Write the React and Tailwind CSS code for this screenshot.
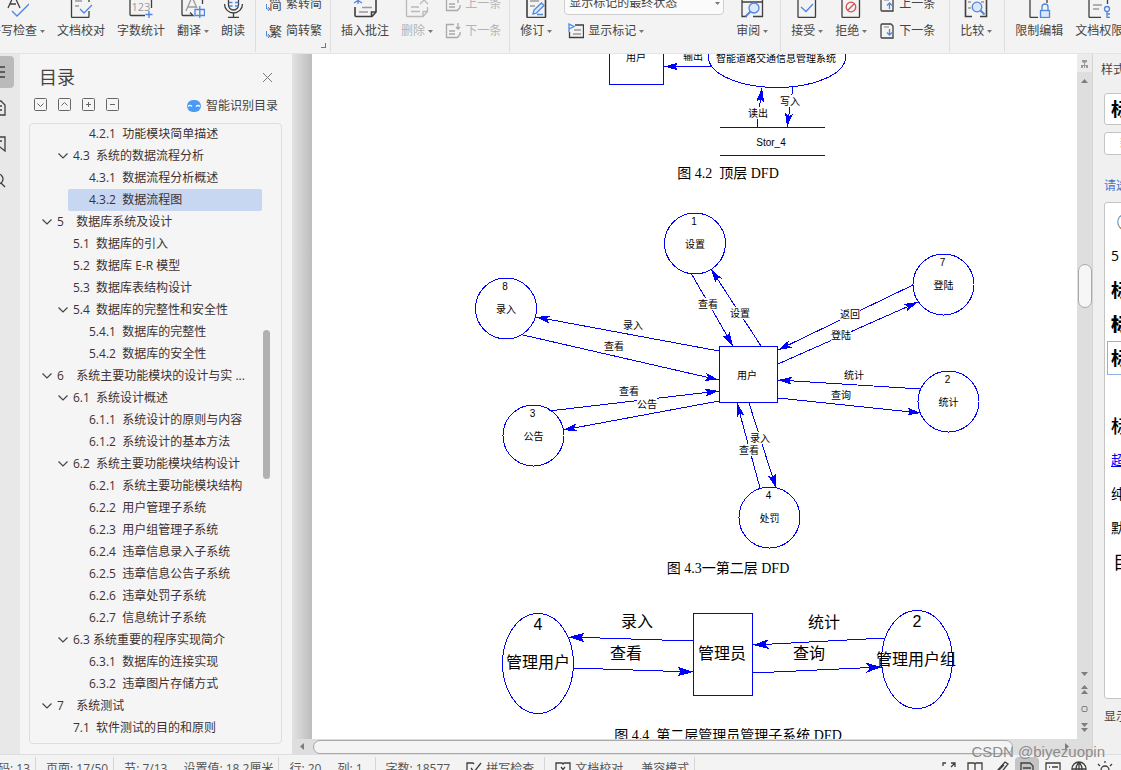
import React, { useState } from "react";

const DARK = "#3f3f3f";
const BLUE = "#4f86e0";
const GRAY = "#9a9a9a";

const outline = [
  { level: 3, num: "4.2.1", title: "功能模块简单描述" },
  { level: 2, num: "4.3", title: "系统的数据流程分析", open: true },
  { level: 3, num: "4.3.1", title: "数据流程分析概述" },
  { level: 3, num: "4.3.2", title: "数据流程图" },
  { level: 1, num: "5", title: "数据库系统及设计", open: true },
  { level: 2, num: "5.1", title: "数据库的引入" },
  { level: 2, num: "5.2", title: "数据库 E-R 模型" },
  { level: 2, num: "5.3", title: "数据库表结构设计" },
  { level: 2, num: "5.4", title: "数据库的完整性和安全性", open: true },
  { level: 3, num: "5.4.1", title: "数据库的完整性" },
  { level: 3, num: "5.4.2", title: "数据库的安全性" },
  { level: 1, num: "6", title: "系统主要功能模块的设计与实 ...", open: true },
  { level: 2, num: "6.1", title: "系统设计概述", open: true },
  { level: 3, num: "6.1.1", title: "系统设计的原则与内容" },
  { level: 3, num: "6.1.2", title: "系统设计的基本方法" },
  { level: 2, num: "6.2", title: "系统主要功能模块结构设计", open: true },
  { level: 3, num: "6.2.1", title: "系统主要功能模块结构" },
  { level: 3, num: "6.2.2", title: "用户管理子系统" },
  { level: 3, num: "6.2.3", title: "用户组管理子系统" },
  { level: 3, num: "6.2.4", title: "违章信息录入子系统" },
  { level: 3, num: "6.2.5", title: "违章信息公告子系统" },
  { level: 3, num: "6.2.6", title: "违章处罚子系统" },
  { level: 3, num: "6.2.7", title: "信息统计子系统" },
  { level: 2, num: "6.3", title: "系统重要的程序实现简介", open: true, tight: true },
  { level: 3, num: "6.3.1", title: "数据库的连接实现" },
  { level: 3, num: "6.3.2", title: "违章图片存储方式" },
  { level: 1, num: "7", title: "系统测试", open: true },
  { level: 2, num: "7.1", title: "软件测试的目的和原则" },
];

const indent = { 1: "ml-1 pl-2", 2: "ml-5 pl-2", 3: "ml-9 pl-2" };

const Icon = ({ size = 24, color = DARK, children }) => (
  <svg width={size} height={size} viewBox={`0 0 ${size} ${size}`} fill="none" stroke={color} strokeWidth="1.3" className="shrink-0">
    {children}
  </svg>
);

const icons = {
  spell: (
    <Icon>
      <path d="M3 14 9 1l6 13M5 10h6" />
      <path d="m7 17 5 5L24 10" stroke={BLUE} />
    </Icon>
  ),
  proof: (
    <Icon>
      <path d="M20 17v5.500q0 1-1 1H3.500q-1 0-1-1V0M20 8V0" />
      <path d="M6 7h7M6 12h4" stroke={GRAY} />
      <path d="m11 15 4 4 8-8" stroke={BLUE} />
    </Icon>
  ),
  count: (
    <Icon>
      <path d="M1 0v20.500q0 1 1 1h14M22.500 0v14" />
      <text x="2.500" y="17" fontSize="11" fill={GRAY} stroke="none" fontFamily="Open Sans">123</text>
      <path d="M20 17v7M16.500 20.500h7" stroke={BLUE} />
    </Icon>
  ),
  translate: (
    <Icon>
      <path d="M1 0v20.500q0 1 1 1h10l-3-3M21.500 0v10" />
      <path d="m5 17 6-14 5 11M7 13h8" stroke={GRAY} />
      <path d="M14 15.500h9.500v6H14zM18.800 12v12" stroke={BLUE} />
    </Icon>
  ),
  read: (
    <Icon>
      <rect x="7.500" y="-4" width="10" height="20" rx="5" />
      <path d="M3.500 10a9 9 0 0 0 18 0M12.500 19v4.500M7 23.500h11" />
      <path d="M8 8.500h3.500M14 8.500h3.500M8 12h3.500M14 12h3.500" stroke={BLUE} />
    </Icon>
  ),
  insert: (
    <Icon>
      <path d="M8 3h15v15l-4 4.500H3q-1 0-1-1V13M18.500 22v-4H23" strokeWidth="1.600" />
      <path d="M9 13.500h10M6 18h9" stroke={GRAY} />
      <path d="M5 2v8M1 4l8 5M9 4 1 9" stroke={BLUE} />
    </Icon>
  ),
  remove: (
    <Icon color="#b9b9b9">
      <path d="M13 3H2.500q-1 0-1 1v17.500q0 1 1 1H18l4.500-5V13M18 22v-4.500h4.500M6 13h8M6 17.500h9" />
      <path d="m15 10 4-4 4 4" />
    </Icon>
  ),
  revise: (
    <Icon>
      <rect x="3" y="-2" width="18.500" height="25.500" rx="1" strokeWidth="1.600" />
      <path d="M6 7h9M6 12h5" stroke={GRAY} />
      <path d="m9 20 1-4 7.500-7 2.500 2.500-7.500 7.500zM13 20.500h6" stroke={BLUE} fill="#dbe7fb" />
    </Icon>
  ),
  review: (
    <Icon>
      <path d="M7 22.500H2V0M13 22.500h9.500V0M2 8h20.500" />
      <circle cx="14" cy="14" r="5" stroke={BLUE} fill="#dbe7fb" />
      <path d="m10.500 17.500-5 5" stroke={BLUE} strokeWidth="2" />
    </Icon>
  ),
  accept: (
    <Icon>
      <rect x="3" y="-2" width="17.500" height="25.500" rx="1" />
      <path d="m6 13 5 4.500 7-7.500" stroke={BLUE} />
    </Icon>
  ),
  reject: (
    <Icon>
      <rect x="3" y="-2" width="17.500" height="25.500" rx="1" />
      <circle cx="12" cy="13" r="4.800" stroke="#dc4b4b" />
      <path d="m8.500 16.500 7-7" stroke="#dc4b4b" />
    </Icon>
  ),
  compare: (
    <Icon>
      <path d="M8 22.500H1.500V0M16 22.500h6.500V0" strokeWidth="1.600" />
      <path d="M4 8h3M4 14h3M17 8h3" stroke={GRAY} />
      <circle cx="13" cy="13" r="4.800" stroke={BLUE} fill="#dbe7fb" />
      <path d="m16.500 16.500 4 4" stroke={BLUE} strokeWidth="2" />
    </Icon>
  ),
  lock: (
    <Icon>
      <path d="M11 23.500H4q-1 0-1-1V0M20 9V0" />
      <rect x="13.500" y="16.500" width="9" height="7" stroke={BLUE} fill="#dbe7fb" />
      <path d="M15 16v-3a3 3 0 0 1 6 0v3" stroke={BLUE} />
    </Icon>
  ),
  rights: (
    <Icon>
      <path d="M14 23.500H3q-1 0-1-1V0M20.500 10V0" />
      <path d="M6 11h9M6 15h6" stroke={GRAY} />
      <circle cx="20" cy="15" r="2.500" stroke={BLUE} />
      <path d="M20 17.500V24M20 20h3M20 23.400h3" stroke={BLUE} />
    </Icon>
  ),
};

const Hanzi = ({ char }) => (
  <Icon size={16}>
    <text x="3" y="13" fontSize="13" fill={DARK} stroke="none" fontFamily="Noto Sans CJK SC">{char}</text>
    <path d="M.500 8v5h3M2 11l2 2-2 2" stroke={BLUE} strokeWidth="1" />
  </Icon>
);

const NoteArrow = ({ up }) => (
  <Icon size={16} color="#a9a9a9">
    <path d="M9 1.500H1.500v13h11l2.500-3V9M4 8h6M4 11h6" />
    <path d={up ? "M13 7V1M11 3l2-2 2 2" : "M13 0v6M11 4l2 2 2-2"} />
  </Icon>
);

const PageArrow = ({ up }) => (
  <Icon size={16}>
    <path d="M12 1H3q-1 0-1 1v12q0 1 1 1h11V3z" />
    <path d="M5 4h5" stroke={GRAY} />
    <path d={up ? "M10.500 13V7M8 9.500 10.500 7 13 9.500" : "M10.500 6v6M8 9.500l2.500 2.500L13 9.500"} stroke={BLUE} />
  </Icon>
);

const Caret = () => (
  <svg width="5" height="3" viewBox="0 0 5 3" className="ml-[3px] shrink-0">
    <path d="M0 0h5L2.500 3z" fill="#777" />
  </svg>
);

const ToolButton = ({ icon, label, caret, disabled }) => (
  <button type="button" disabled={disabled} className={`flex shrink-0 flex-col items-center gap-[5px] ${disabled ? "text-[#b4b4b4]" : ""}`}>
    {icons[icon]}
    <span className="flex h-4 items-center whitespace-nowrap">
      {label}
      {caret && <Caret />}
    </span>
  </button>
);

const SmallButton = ({ icon, label, caret, disabled }) => (
  <button type="button" disabled={disabled} className={`flex h-4 items-center gap-1 whitespace-nowrap ${disabled ? "text-[#b4b4b4]" : ""}`}>
    {icon}
    <span className="flex items-center">
      {label}
      {caret && <Caret />}
    </span>
  </button>
);

const Group = ({ className = "", children }) => (
  <div className={`flex h-[52px] shrink-0 items-end gap-3 border-r border-[#dedede] pb-[13px] pl-2.5 ${className}`}>{children}</div>
);

const Ribbon = () => (
  <header className="flex h-[54px] shrink-0 items-end overflow-hidden border-b border-[#e4e4e4] bg-[#f3f3f3] pb-px text-xs leading-4 text-[#444]">
    <div className="-ml-[11px] flex h-[52px] shrink-0 items-end gap-3 border-r border-[#dedede] pr-2.5 pb-[13px]">
      <ToolButton icon="spell" label="拼写检查" caret />
      <ToolButton icon="proof" label="文档校对" />
      <ToolButton icon="count" label="字数统计" />
      <ToolButton icon="translate" label="翻译" caret />
      <ToolButton icon="read" label="朗读" />
    </div>
    <Group className="relative pr-2">
      <div className="flex flex-col gap-[11px]">
        <SmallButton icon={<Hanzi char="简" />} label="繁转简" />
        <SmallButton icon={<Hanzi char="繁" />} label="简转繁" />
      </div>
      <span className="absolute right-1 bottom-1 size-[5px] border-r border-b border-[#777]" />
    </Group>
    <Group className="pr-2">
      <ToolButton icon="insert" label="插入批注" />
      <ToolButton icon="remove" label="删除" caret disabled />
      <div className="flex flex-col gap-[11px]">
        <SmallButton icon={<NoteArrow up />} label="上一条" disabled />
        <SmallButton icon={<NoteArrow />} label="下一条" disabled />
      </div>
    </Group>
    <Group className="pr-3">
      <ToolButton icon="revise" label="修订" caret />
      <div className="flex w-[160px] flex-col gap-2">
        <div className="relative">
          <select aria-label="显示标记的状态" className="h-6 w-full appearance-none rounded border border-[#cfcfcf] bg-[#fbfbfb] pl-1 text-xs">
            <option>显示标记的最终状态</option>
          </select>
          <span className="pointer-events-none absolute right-1 bottom-2.5 flex">
            <Caret />
          </span>
        </div>
        <div className="pl-1">
          <SmallButton
            icon={
              <Icon size={16}>
                <path d="M7 2h8.500v12.500H1.500V9" />
                <path d="M6 7h7M5 11h8" stroke={GRAY} />
                <path d="M1 9V1l5 2.500L1 6" stroke={BLUE} />
              </Icon>
            }
            label="显示标记"
            caret
          />
        </div>
      </div>
      <ToolButton icon="review" label="审阅" caret />
    </Group>
    <Group className="pr-3.5">
      <ToolButton icon="accept" label="接受" caret />
      <ToolButton icon="reject" label="拒绝" caret />
      <div className="flex flex-col gap-[11px]">
        <SmallButton icon={<PageArrow up />} label="上一条" />
        <SmallButton icon={<PageArrow />} label="下一条" />
      </div>
    </Group>
    <Group className="pr-3">
      <ToolButton icon="compare" label="比较" caret />
    </Group>
    <Group>
      <ToolButton icon="lock" label="限制编辑" />
      <ToolButton icon="rights" label="文档权限" />
    </Group>
  </header>
);

const Rail = () => {
  const items = [
    { label: "目录", path: "M2 3h13M2 8h13M2 13h13" },
    { label: "章节", path: "M2 1h9l4 4v10H2zM5 6h7M5 10h7" },
    { label: "书签", path: "M2 1h13v14l-5-4-5 4M6 5h6" },
    { label: "查找", path: "M13 7A5 5 0 1 1 3 7a5 5 0 0 1 10 0M11 11l4 4" },
  ];
  return (
    <nav className="flex w-5 shrink-0 flex-col items-end gap-1 overflow-hidden bg-[#e8e8e8] pt-0.5 pr-1.5">
      {items.map((item, i) => (
        <button
          key={item.label}
          type="button"
          aria-label={item.label}
          className={`flex h-8 w-8 shrink-0 items-center justify-center rounded ${i === 0 ? "bg-[#bababa]" : ""}`}
        >
          <Icon size={16}>
            <path d={item.path} />
          </Icon>
        </button>
      ))}
    </nav>
  );
};

const OutlinePanel = () => {
  const [selected, setSelected] = useState("4.3.2");
  const tools = [
    ["展开", "m3.500 5.500 3 3 3-3"],
    ["收起", "m3.500 7.500 3-3 3 3"],
    ["升级", "M4 6.500h5M6.500 4v5"],
    ["降级", "M4 6.500h5"],
  ];
  return (
    <aside className="flex w-[272px] shrink-0 flex-col bg-[#f5f5f5] pr-2.5 pb-2.5 pl-[9px]">
      <div className="flex h-11 shrink-0 items-center justify-between pt-0.5 pr-[9px] pl-2.5">
        <h2 className="text-lg text-[#444]">目录</h2>
        <button type="button" aria-label="关闭">
          <svg width="11" height="11" viewBox="0 0 11 11" stroke="#777" strokeWidth="1">
            <path d="m1 1 9 9M10 1l-9 9" />
          </svg>
        </button>
      </div>
      <div className="flex h-[25px] shrink-0 items-start gap-[11px] pr-1 pl-[5px]">
        {tools.map(([label, d]) => (
          <button key={label} type="button" aria-label={label}>
            <svg width="13" height="13" viewBox="0 0 13 13" fill="none" stroke="#666">
              <rect x="0.500" y="0.500" width="12" height="12" rx="1" />
              <path d={d} />
            </svg>
          </button>
        ))}
        <button type="button" className="ml-auto flex h-4 items-center gap-[5px] text-xs leading-3 text-[#444]">
          <svg width="14" height="12" viewBox="0 0 14 12">
            <rect width="14" height="12" rx="6" fill="#4a9bf5" />
            <path d="M1 6.500q2-2 4 0M9 6.500q2-2 4 0" stroke="#fff" fill="none" strokeWidth="1.200" />
          </svg>
          智能识别目录
        </button>
      </div>
      <div className="flex min-h-0 flex-1 rounded border border-[#dedede] pt-1 pr-[11px] pb-1">
        <ul className="flex min-w-0 flex-1 flex-col justify-end overflow-hidden pl-[2px] text-xs text-[#40312f]">
          {outline.map((row) => (
            <li key={row.num} className={`flex shrink-0 rounded-[2px] ${indent[row.level]} ${selected === row.num ? "bg-[#c7d7f1]" : ""}`}>
              <button type="button" onClick={() => setSelected(row.num)} className="flex h-[22px] w-full items-center whitespace-pre">
                <span className="flex w-[13px] shrink-0">
                  {row.open && (
                    <svg width="10" height="6" viewBox="0 0 10 6" fill="none" stroke="#444" strokeWidth="1.200" className="-ml-0.5">
                      <path d="m.500.500 4.500 4.500L9.500.500" />
                    </svg>
                  )}
                </span>
                {row.num}
                {row.level === 1 ? "    " : row.tight ? " " : "  "}
                {row.title}
              </button>
            </li>
          ))}
        </ul>
        <div className="ml-px w-[7px] shrink-0 pt-[202px]">
          <div className="h-[149px] rounded-full bg-[#b1b1b1]" />
        </div>
      </div>
    </aside>
  );
};

const Arrowheads = () => (
  <defs>
    <marker id="head" markerUnits="userSpaceOnUse" markerWidth="14" markerHeight="8" refX="14" refY="4" orient="auto">
      <path d="M0 0 14 4 0 8l3-4z" fill="#00f" />
    </marker>
    <marker id="bighead" markerUnits="userSpaceOnUse" markerWidth="16" markerHeight="10" refX="16" refY="5" orient="auto">
      <path d="M0 0 16 5 0 10l4-5z" fill="#00f" />
    </marker>
  </defs>
);

const Label = ({ x, y, size = 10, plain, children }) => (
  <g>
    {!plain && <rect x={x - 10} y={y - 6} width="20" height="12" fill="#fff" />}
    <text x={x} y={y + Math.round(size * 0.36)} fontSize={size} textAnchor="middle" fill="#000">
      {children}
    </text>
  </g>
);

const Edge = ({ points, big }) => {
  const [x1, y1, x2, y2] = points;
  return <line x1={x1} y1={y1} x2={x2} y2={y2} stroke="#00f" markerEnd={big ? "url(#bighead)" : "url(#head)"} />;
};

const figureFont = "shrink-0 font-['Liberation_Sans','Noto_Sans_CJK_SC',sans-serif]";

const TopFigure = () => (
  <svg width="600" height="105" viewBox="428 54 600 105" fill="none" shapeRendering="crispEdges" className={figureFont}>
    <Arrowheads />
    <rect x="609.500" y="30.500" width="54" height="54" stroke="#00f" />
    <ellipse cx="777" cy="57" rx="68.500" ry="30.500" stroke="#00f" />
    <Edge points={[711, 66.5, 664, 66.5]} />
    <Edge points={[757, 127, 762, 88]} />
    <Edge points={[793, 87, 787, 127]} />
    <path d="M720 127.500h105M720 155.500h105" stroke="#00f" />
    <Label x={636} y={57}>用户</Label>
    <Label x={693} y={56}>输出</Label>
    <Label x={776} y={58} plain>智能道路交通信息管理系统</Label>
    <Label x={758} y={113}>读出</Label>
    <Label x={790} y={101}>写入</Label>
    <Label x={771} y={142} plain>Stor_4</Label>
  </svg>
);

const nodes = [
  { id: "1", name: "设置", x: 695, y: 243.5 },
  { id: "8", name: "录入", x: 506, y: 308.5 },
  { id: "7", name: "登陆", x: 943.5, y: 284.5 },
  { id: "2", name: "统计", x: 948.5, y: 401.5 },
  { id: "3", name: "公告", x: 533.5, y: 435.5 },
  { id: "4", name: "处罚", x: 769.5, y: 517.5 },
];

const flows = [
  { points: [691, 273, 733, 346], name: "查看", at: [708, 304] },
  { points: [761, 346, 711, 269], name: "设置", at: [740, 313] },
  { points: [719, 351, 536, 317], name: "录入", at: [633, 325], plain: true },
  { points: [523, 335, 719, 380], name: "查看", at: [614, 346], plain: true },
  { points: [549, 411, 719, 391], name: "查看", at: [629, 391], plain: true },
  { points: [719, 401, 563, 430], name: "公告", at: [647, 404] },
  { points: [913, 285, 778, 350], name: "返回", at: [850, 314] },
  { points: [778, 364, 918, 302], name: "登陆", at: [841, 335] },
  { points: [921, 389, 778, 380], name: "统计", at: [854, 375], plain: true },
  { points: [778, 398, 921, 413], name: "查询", at: [841, 395], plain: true },
  { points: [760, 488, 737, 403], name: "查看", at: [749, 450] },
  { points: [749, 403, 776, 488], name: "录入", at: [760, 438] },
];

const SecondFigure = () => (
  <svg width="600" height="365" viewBox="428 189 600 365" fill="none" shapeRendering="crispEdges" className={figureFont}>
    {flows.map((f) => (
      <Edge key={f.points.join()} points={f.points} />
    ))}
    {flows.map((f) => (
      <Label key={f.points.join()} x={f.at[0]} y={f.at[1]} plain={f.plain}>
        {f.name}
      </Label>
    ))}
    <rect x="719.500" y="346.500" width="58" height="56" stroke="#00f" />
    <Label x={747} y={375} plain>用户</Label>
    {nodes.map((n) => (
      <g key={n.id}>
        <circle cx={n.x} cy={n.y} r="30.500" stroke="#00f" />
        <Label x={n.x - 1} y={n.y - 22.5} plain>{n.id}</Label>
        <Label x={n.x} y={n.y + 0.5} plain>{n.name}</Label>
      </g>
    ))}
  </svg>
);

const ThirdFigure = () => (
  <svg width="600" height="137" viewBox="428 584 600 137" fill="none" shapeRendering="crispEdges" className={figureFont}>
    <ellipse cx="538" cy="663.500" rx="35.500" ry="50" stroke="#00f" />
    <ellipse cx="917" cy="659.500" rx="35.500" ry="49" stroke="#00f" />
    <rect x="693.500" y="613.500" width="59" height="82" stroke="#00f" />
    <Edge points={[693, 641, 569, 637]} big />
    <Edge points={[573, 668, 693, 672]} big />
    <Edge points={[885, 638, 753, 645]} big />
    <Edge points={[753, 673, 882, 667]} big />
    <Label x={538} y={624} size={16} plain>4</Label>
    <Label x={917} y={621} size={16} plain>2</Label>
    <Label x={538} y={662} size={16} plain>管理用户</Label>
    <Label x={722} y={653} size={16} plain>管理员</Label>
    <Label x={916} y={659} size={16} plain>管理用户组</Label>
    <Label x={637} y={621} size={16} plain>录入</Label>
    <Label x={626} y={653} size={16} plain>查看</Label>
    <Label x={824} y={622} size={16} plain>统计</Label>
    <Label x={809} y={653} size={16} plain>查询</Label>
  </svg>
);

const Caption = ({ children }) => (
  <p className="flex h-[30px] shrink-0 items-center font-['Liberation_Serif','Noto_Sans_CJK_SC',serif] text-sm whitespace-pre text-black">
    {children}
  </p>
);

const Document = () => (
  <main className="flex min-w-0 flex-1 flex-col">
    <div className="flex min-h-0 flex-1">
      <div className="w-5 shrink-0 bg-linear-to-r from-[#e2e2e2] to-[#bdbdbd]" />
      <article className="flex min-w-0 flex-1 flex-col items-center overflow-hidden bg-white pl-[67px]">
        <TopFigure />
        <Caption>{"图 4.2  顶层 DFD"}</Caption>
        <SecondFigure />
        <Caption>{"图 4.3一第二层 DFD"}</Caption>
        <ThirdFigure />
        <Caption>{"图 4.4  第二层管理员管理子系统 DFD"}</Caption>
      </article>
    </div>
    <div className="flex h-[15px] shrink-0 items-center bg-[#dedede] pr-2">
      <svg width="21" height="7" viewBox="0 0 21 7" className="shrink-0">
        <path d="M12 0v7L8 3.500z" fill="#7d7d7d" />
      </svg>
      <div className="h-[14px] flex-1 rounded-full border border-[#a9a9a9] bg-[#f4f4f4]" />
      <svg width="56" height="7" viewBox="0 0 56 7" className="shrink-0">
        <path d="M52 0v7l4-3.500z" fill="#7d7d7d" />
      </svg>
    </div>
  </main>
);

const VerticalScroll = () => (
  <div className="flex w-[15px] shrink-0 flex-col items-center bg-[#dedede] pb-[22px]">
    <svg width="15" height="18" viewBox="0 0 15 18" className="shrink-0 bg-[#ebebeb]">
      <path d="M5 6h5v2l-2 1v2h3v3H4v-3h3V9L5 8z" fill="#9a9a9a" />
      <path d="M6.500 12v2M8.500 12v2" stroke="#ebebeb" />
    </svg>
    <svg width="7" height="18" viewBox="0 0 7 18" className="shrink-0">
      <path d="M0 11h7L3.500 7z" fill="#7d7d7d" />
    </svg>
    <div className="mt-[174px] h-11 w-[14px] shrink-0 rounded-full border border-[#a9a9a9] bg-[#f6f6f6]" />
    <svg width="7" height="64" viewBox="0 0 7 64" className="mt-auto shrink-0">
      <g fill="#7d7d7d">
        <path d="M0 4h7L3.500 8zM0 21h7l-3.500-4zM0 26h7l-3.500-4zM0 55h7l-3.500 4zM0 60h7l-3.500 4z" />
      </g>
      <rect x="1" y="38.500" width="5" height="5" rx="1" fill="none" stroke="#7d7d7d" />
    </svg>
  </div>
);

const StylePanel = () => {
  const styles = [
    { text: "①默认段落字体", cls: "pl-1.5 text-base" },
    { text: "5   正文", cls: "text-sm" },
    { text: "标题 1", cls: "text-lg font-bold" },
    { text: "标题 2", cls: "text-lg font-black" },
    { text: "标题 3", cls: "text-lg font-bold", active: true },
    { text: "", cls: "" },
    { text: "标题 4", cls: "text-lg font-medium" },
    { text: "超链接", cls: "text-sm text-[#00f] underline" },
    { text: "纯文本", cls: "text-sm" },
    { text: "默认字体", cls: "text-sm" },
    { text: "目录 1", cls: "pl-0.5 text-lg" },
  ];
  return (
    <aside className="flex w-[29px] shrink-0 flex-col overflow-hidden border-l border-[#d4d4d4] bg-[#f0f0f0] text-xs whitespace-nowrap text-[#444]">
      <h2 className="mt-2 ml-2 h-4 shrink-0 leading-4">样式和格式</h2>
      <div className="mt-[15px] ml-[11px] flex h-8 w-60 shrink-0 items-center rounded-[3px] border border-[#c4c4c4] bg-white pl-1.5 text-lg font-bold text-black">
        标题 3
      </div>
      <button type="button" className="mt-[7px] ml-[11px] flex h-[23px] w-24 shrink-0 items-center rounded-[3px] border border-[#c4c4c4] bg-white pl-[15px] text-[#c98a55]">
        新样式
      </button>
      <p className="mt-[23px] ml-[11px] h-4 shrink-0 leading-4 text-[#4a72c8]">请选择要应用的格式</p>
      <ul className="mt-2 ml-[11px] flex min-h-0 w-60 flex-1 flex-col rounded-[3px] border border-[#c4c4c4] bg-white pt-0.5 pl-0.5 whitespace-pre text-black">
        {styles.map((s, i) => (
          <li key={i} className={`flex h-[34px] shrink-0 items-center border pl-[3px] ${s.active ? "border-[#8fb0e0]" : "border-transparent"}`}>
            <span className={s.cls}>{s.text}</span>
          </li>
        ))}
      </ul>
      <p className="mt-2.5 mb-[29px] ml-[11px] h-4 shrink-0 leading-4">显示:</p>
    </aside>
  );
};

const Segment = ({ className = "pr-[5px]", children }) => (
  <div className={`flex h-6 shrink-0 items-center gap-4 border-r border-[#d6d6d6] pl-2.5 ${className}`}>{children}</div>
);

const StatusBar = () => {
  const views = [
    ["全屏", "M10 2h4v4M14 2l-4 4M6 14H2v-4M2 5V2h3M14 11v3h-3"],
    ["阅读", "M1 2h6l1 1 1-1h6v12H1zM8 3v11"],
    ["书写", "M2 15l2-5L12 1l3 2-8 10zM5 10l6-6"],
    ["页面", "M2 2h9l3 3v10H2zM4 7h8M4 10h8"],
    ["大纲", "M1 2h14v13H1zM4 6h1M7 6h6M4 10h1M7 10h6"],
    ["网页", "M8 1a7 7 0 1 0 0 14A7 7 0 1 0 8 1M8 1v14M1 8h14M8 1Q2 8 8 15M8 1q6 7 0 14"],
    ["护眼", "M8 5a4 4 0 1 0 0 8 4 4 0 1 0 0-8M8 0v2M1 3l2 2M15 3l-2 2M0 10h2M14 10h2"],
  ];
  return (
    <footer className="relative h-4 shrink-0 bg-[#f3f3f3]">
      <div className="h-full overflow-hidden border-t border-[#dedede]">
        <div className="flex h-7 items-center text-xs whitespace-nowrap text-[#555]">
          <div className="-ml-6 flex shrink-0 items-center">
            <Segment>页码: 13</Segment>
            <Segment>页面: 17/50</Segment>
            <Segment>
              <span>节: 7/13</span>
              <span>设置值: 18.2厘米</span>
            </Segment>
            <Segment className="pr-3">
              <span>行: 20</span>
              <span>列: 1</span>
            </Segment>
            <Segment className="pr-2.5">
              <span>字数: 18577</span>
              <button type="button" className="flex items-center gap-1">
                <Icon size={16}>
                  <path d="M8 3 7 2H1v12h14V9M5 7l3 4 7-9" />
                </Icon>
                拼写检查
              </button>
            </Segment>
            <Segment>
              <button type="button" className="flex items-center gap-1">
                <Icon size={16}>
                  <path d="M8 3 7 2H1v12h14V2H9zM6 6l4 5M10 6l-4 5" />
                </Icon>
                文档校对
              </button>
              <span className="pl-0.5">兼容模式</span>
            </Segment>
          </div>
          <div className="ml-auto flex shrink-0 items-center gap-0.5 pr-1">
            {views.map(([label, d]) => (
              <button
                key={label}
                type="button"
                aria-label={label}
                className={`flex h-6 w-6 items-center justify-center rounded ${label === "页面" ? "bg-[#c4c4c4]" : ""}`}
              >
                <Icon size={16}>
                  <path d={d} />
                </Icon>
              </button>
            ))}
          </div>
        </div>
      </div>
      <span className="pointer-events-none absolute right-4 bottom-2 font-['Liberation_Sans',sans-serif] text-[15px] leading-5 text-[#8c8c8c]">
        CSDN @biyezuopin
      </span>
    </footer>
  );
};

export default function App() {
  return (
    <div className="flex h-screen flex-col overflow-hidden bg-[#f3f3f3] font-['Open_Sans','Noto_Sans_CJK_SC',sans-serif]">
      <Ribbon />
      <div className="flex min-h-0 flex-1">
        <Rail />
        <OutlinePanel />
        <Document />
        <VerticalScroll />
        <StylePanel />
      </div>
      <StatusBar />
    </div>
  );
}
